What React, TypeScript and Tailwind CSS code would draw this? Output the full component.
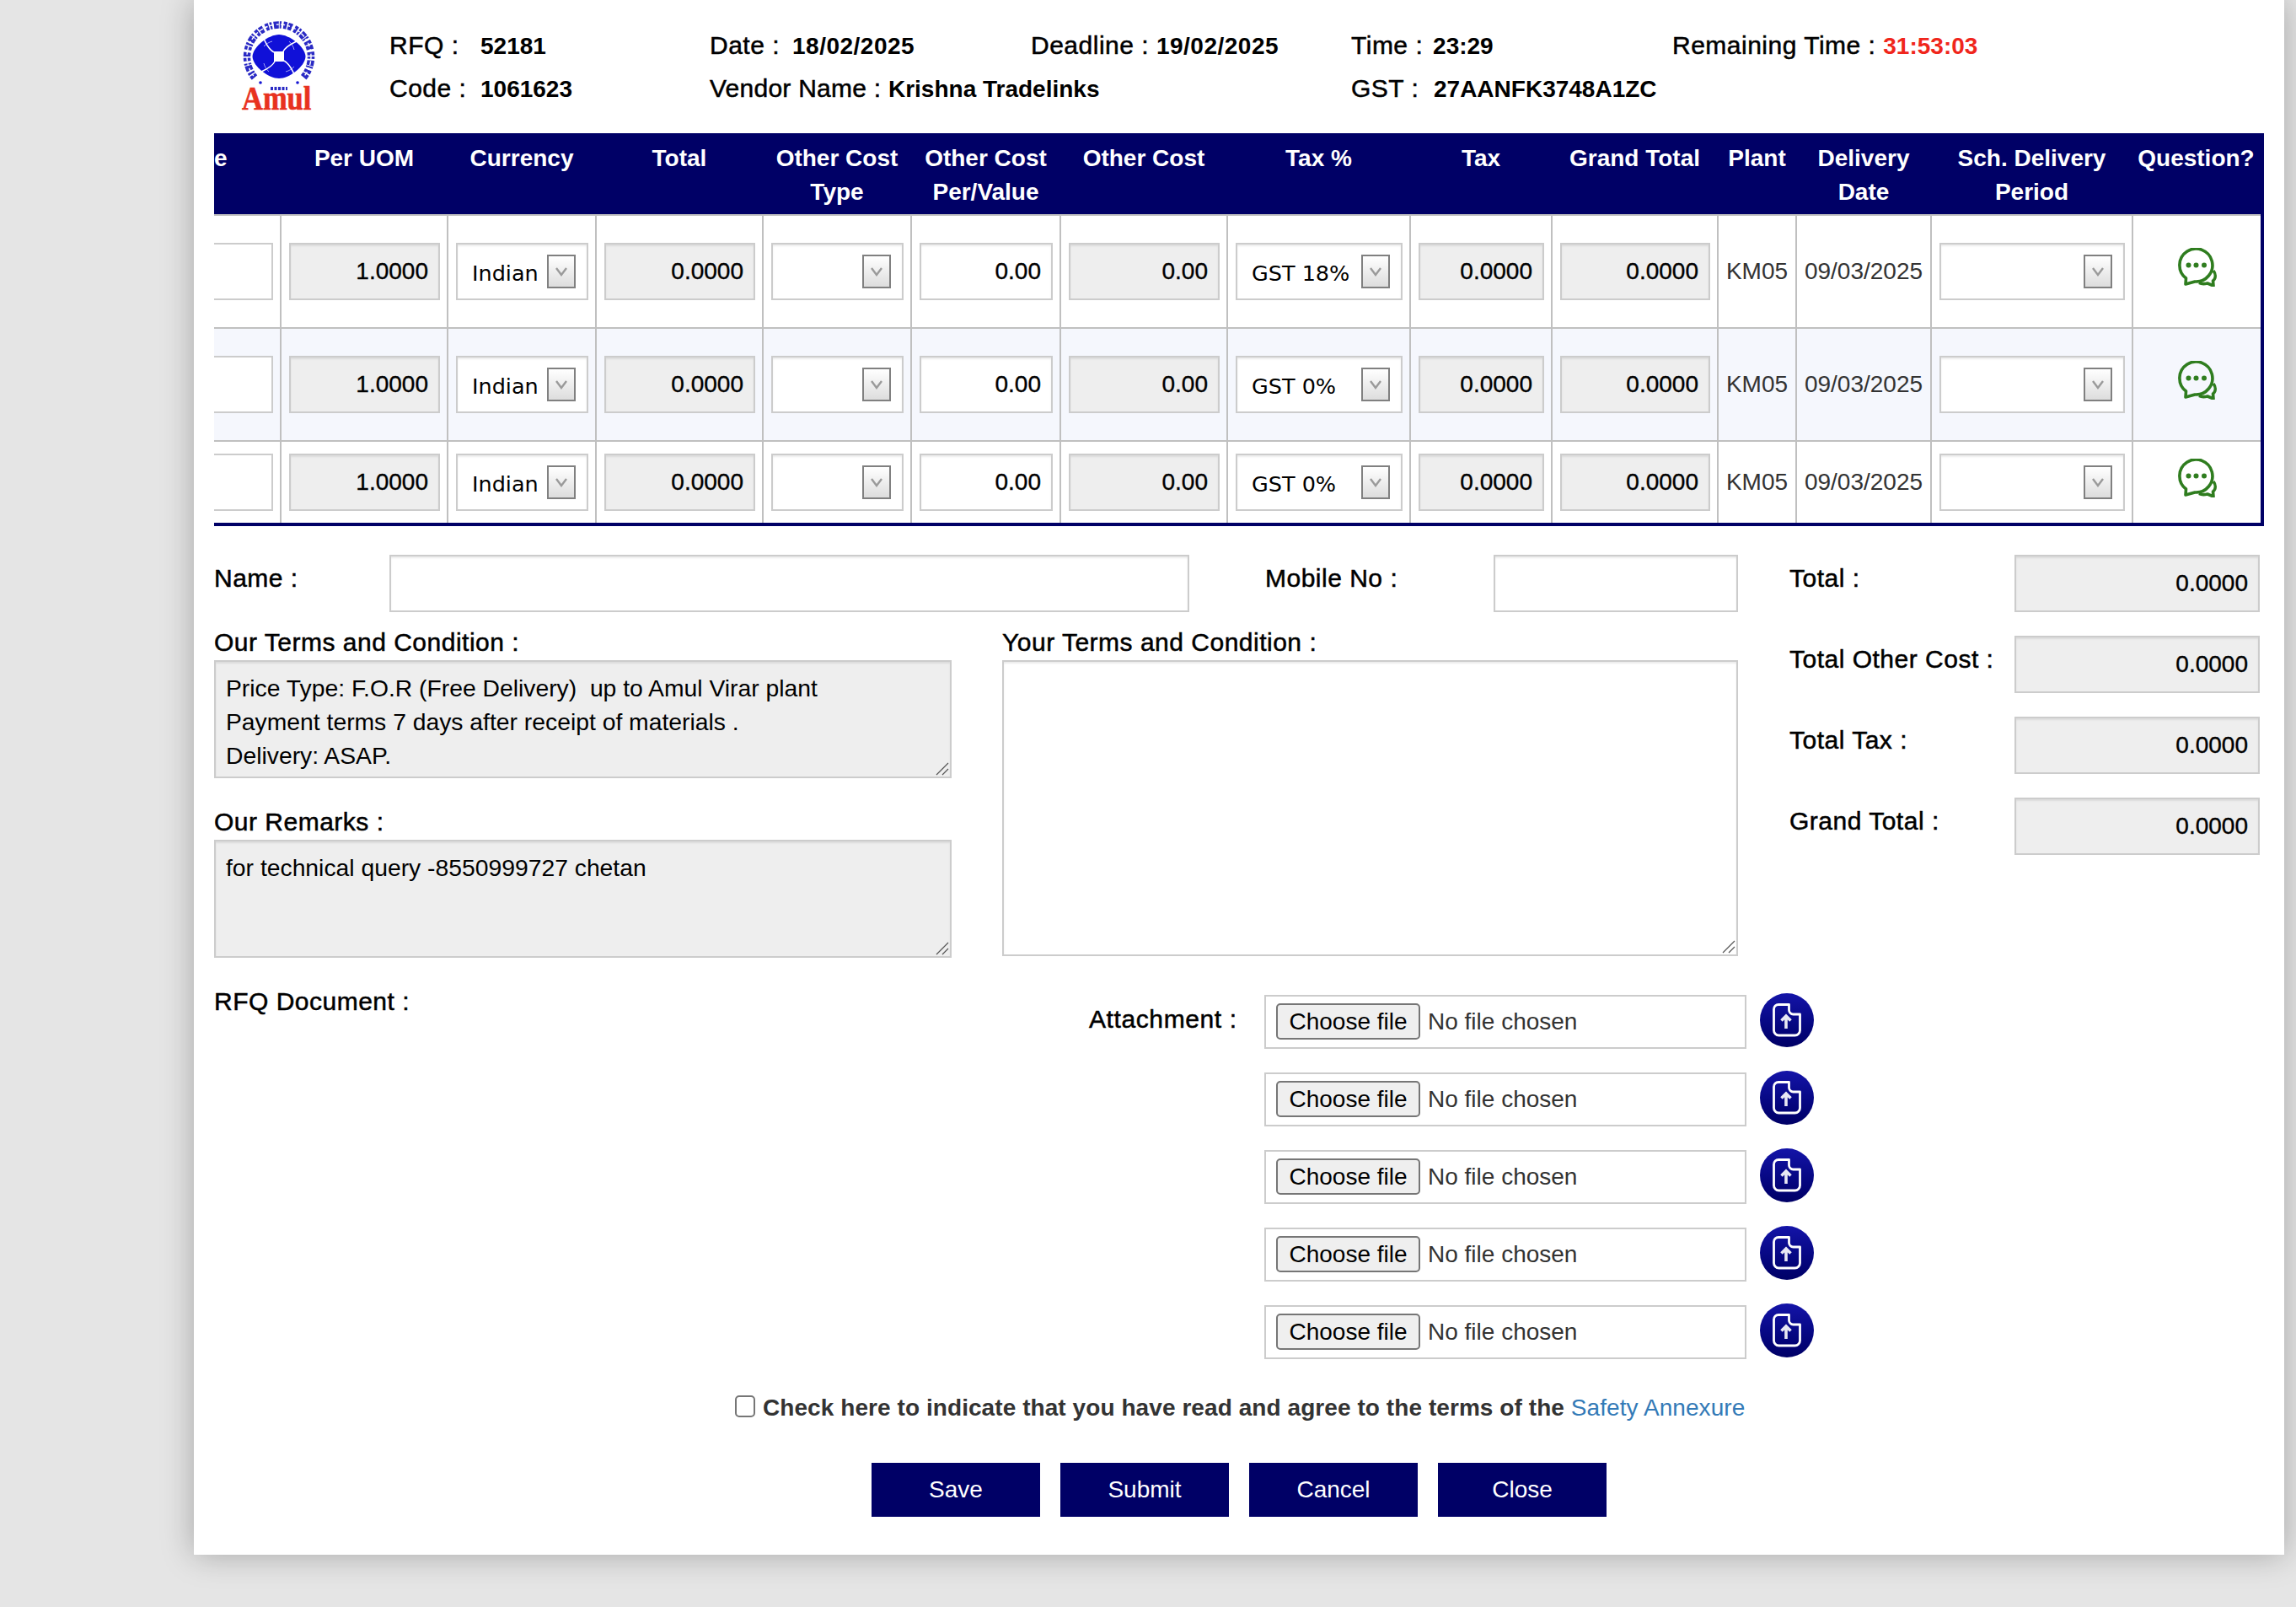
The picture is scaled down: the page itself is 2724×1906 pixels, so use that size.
const medium = "[-webkit-text-stroke:0.5px_currentColor]";
const strong = "text-[28px] font-bold tracking-normal [-webkit-text-stroke:0]";
const strongDate = "text-[28px] font-bold tracking-[0.5px] [-webkit-text-stroke:0]";

const columnWidths = [80, 198, 176, 198, 176, 177, 198, 217, 168, 197, 93, 160, 239, 151];

const headers: string[][] = [
  ["Per UOM"],
  ["Currency"],
  ["Total"],
  ["Other Cost", "Type"],
  ["Other Cost", "Per/Value"],
  ["Other Cost"],
  ["Tax %"],
  ["Tax"],
  ["Grand Total"],
  ["Plant"],
  ["Delivery", "Date"],
  ["Sch. Delivery", "Period"],
  ["Question?"],
];

const rows = [
  { tax: "GST 18%", height: "h-[134px]", bg: "bg-white", border: "border-b-2", shift: "" },
  { tax: "GST 0%", height: "h-[134px]", bg: "bg-[#f5f7fd]", border: "border-b-2", shift: "" },
  { tax: "GST 0%", height: "h-[96px]", bg: "bg-white", border: "", shift: "pt-[14px] pb-[14px]" },
];

function ReadOnlyBox({ value, grey }: { value: string; grey?: boolean }) {
  return (
    <input
      readOnly
      value={value}
      className={`h-[68px] w-full border-2 border-[#cccccc] pl-[12px] pr-[12px] text-right text-[28px] text-black shadow-[inset_0_2px_2px_rgba(0,0,0,0.08)] outline-none [-webkit-text-stroke:0.35px_currentColor] ${grey ? "bg-[#eeeeee]" : "bg-white"}`}
    />
  );
}

function SelectBox({ label }: { label?: string }) {
  return (
    <div className="flex h-[68px] w-full items-center border-2 border-[#cccccc] bg-white pl-[17px] pr-[13px] shadow-[inset_0_2px_2px_rgba(0,0,0,0.08)]">
      {label && <span className="pt-[5px] font-['DejaVu_Sans',sans-serif] text-[25.5px] leading-none text-black">{label}</span>}
      <span className="ml-auto flex h-[40px] w-[34px] items-center justify-center border-2 border-[#808080] bg-gradient-to-b from-white to-[#dddddd]">
        <svg width="16" height="12" viewBox="0 0 16 12" fill="none" stroke="#9a9a9a" strokeWidth="2.4">
          <path d="M2 2l6 8 6-8" />
        </svg>
      </span>
    </div>
  );
}

function ChatIcon() {
  return (
    <svg className="mx-auto -mt-[10px] block" width="46" height="46" viewBox="0 0 46 46" fill="none" stroke="#2f7d1f" strokeWidth="3.6" strokeLinejoin="round">
      <path d="M9 43L9.500 36A19.500 19.500 0 1 1 20 40Z" />
      <path d="M42 27C45 31 45 36 41.500 39L42 45L35 42C31 43 28 43 25 41.500" />
      <circle cx="12.500" cy="20.500" r="3" fill="#2f7d1f" stroke="none" />
      <circle cx="21.500" cy="20.500" r="3" fill="#2f7d1f" stroke="none" />
      <circle cx="31" cy="20.500" r="3" fill="#2f7d1f" stroke="none" />
    </svg>
  );
}

function UploadIcon() {
  return (
    <span className="-mt-[4px] flex h-[64px] w-[64px] shrink-0 items-center justify-center rounded-full bg-gradient-to-b from-[#1414a8] to-[#000066]">
      <svg width="34" height="40" viewBox="0 0 34 40" fill="none" stroke="white" strokeWidth="2.800">
        <path d="M7 1.500H19.500V8a5 5 0 0 0 5 5H32.500V32a6 6 0 0 1-6 6H7.500a6 6 0 0 1-6-6V7A5.500 5.500 0 0 1 7 1.500Z" strokeLinejoin="round" />
        <path d="M16 30V15M10.500 20.500L16 15L21.500 20.500" strokeWidth="3.600" stroke="#e8e8f4" />
      </svg>
    </span>
  );
}

function AmulLogo() {
  return (
    <svg className="mt-[24px] shrink-0" width="92" height="114" viewBox="0 0 92 114">
      {/* lettering of the ring, too small to read in the picture */}
      <path d="M19 68A38 38 0 1 1 77 68" fill="none" stroke="#2a2ac4" strokeWidth="8.500" strokeDasharray="4 1.500 2.500 2 6 1 2 2.500 4 1.500 5 3" />
      <circle cx="48" cy="43" r="38" fill="none" stroke="white" strokeWidth="1.400" strokeDasharray="3 2.500 5 3" />
      <circle cx="26" cy="74" r="1.800" fill="#1414d2" />
      <circle cx="70" cy="74" r="1.800" fill="#1414d2" />
      <path d="M38 81h20" stroke="#2a2ac4" strokeWidth="4" strokeDasharray="3 1.500" />
      <g transform="translate(48 43)">
        <path d="M0-26C12-26 31-12 31.500 0C31 12 12 26 0 26C-12 26-31 12-31.500 0C-31-12-12-26 0-26Z" fill="#1010d8" />
        {[0, 90, 180, 270].map((angle) => (
          <g key={angle} transform={`rotate(${angle})`} fill="none" stroke="white">
            <path d="M5-6C9-13 15-15 21-18" strokeWidth="1.500" />
            <path d="M-8-18C-12-17-15-15-18-12" strokeWidth="0.600" />
          </g>
        ))}
        <rect x="-6" y="-6" width="12" height="12" fill="white" />
      </g>
      <text transform="translate(4 106) scale(1 1.15)" fontFamily="'Liberation Serif', serif" fontWeight="700" fontSize="34.500" fill="#e8321f" stroke="#e8321f" strokeWidth="0.6">
        Amul
      </text>
    </svg>
  );
}

function TopInfo() {
  return (
    <div className="flex h-[158px] items-start pl-[53px]">
      <AmulLogo />
      <div className={`ml-[87px] mt-[34px] grid grid-cols-[380px_381px_380px_381px_auto] grid-rows-[40px_50px] items-center text-[30px] leading-[40px] tracking-[0.5px] text-black ${medium}`}>
        <div className="flex items-baseline"><span className="w-[108px]">RFQ :</span><b className={strong}>52181</b></div>
        <div className="flex items-baseline"><span className="w-[98px]">Date :</span><b className={strongDate}>18/02/2025</b></div>
        <div>Deadline : <b className={strongDate}>19/02/2025</b></div>
        <div>Time : <b className={`ml-[3px] ${strong}`}>23:29</b></div>
        <div>Remaining Time : <b className={`${strong} text-[#f0261c]`}>31:53:03</b></div>
        <div className="flex items-baseline pt-[12px]"><span className="w-[108px]">Code :</span><b className={strong}>1061623</b></div>
        <div className="col-span-2 pt-[12px] tracking-[0.25px]">Vendor Name : <b className={strong}>Krishna Tradelinks</b></div>
        <div className="col-span-2 flex items-baseline pt-[12px]"><span className="w-[98px]">GST :</span><b className={strong}>27AANFK3748A1ZC</b></div>
      </div>
    </div>
  );
}

function QuoteTable() {
  return (
    <div className="overflow-hidden border-b-4 border-r-4 border-[#000066]">
      <table className="w-[2428px] table-fixed border-separate border-spacing-0 text-[28px]">
        <colgroup>
          {columnWidths.map((w, i) => (
            <col key={i} style={{ width: w }} />
          ))}
        </colgroup>
        <thead>
          <tr className="h-[98px] bg-[#000066] text-white">
            <th className="border-b-2 border-[#c0c0c0] pt-[10px] text-left align-top font-bold leading-[40px]">e</th>
            {headers.map((lines, i) => (
              <th key={i} className="whitespace-nowrap border-b-2 border-[#c0c0c0] pr-[2px] pt-[10px] text-center align-top font-bold leading-[40px]">
                {lines.map((line) => (
                  <div key={line}>{line}</div>
                ))}
              </th>
            ))}
          </tr>
        </thead>
        <tbody>
          {rows.map((row, r) => {
            const cell = `border-r-2 border-[#c0c0c0] pl-[9px] pr-[8px] align-middle ${row.border} ${row.shift}`;
            return (
              <tr key={r} className={`${row.height} ${row.bg}`}>
                <td className={`border-r-2 border-[#c0c0c0] pr-[8px] ${row.border} ${row.shift}`}>
                  <div className="h-[68px] border-y-2 border-r-2 border-[#cccccc] bg-white" />
                </td>
                <td className={cell}><ReadOnlyBox grey value="1.0000" /></td>
                <td className={cell}><SelectBox label="Indian" /></td>
                <td className={cell}><ReadOnlyBox grey value="0.0000" /></td>
                <td className={cell}><SelectBox /></td>
                <td className={cell}><ReadOnlyBox value="0.00" /></td>
                <td className={cell}><ReadOnlyBox grey value="0.00" /></td>
                <td className={cell}><SelectBox label={row.tax} /></td>
                <td className={cell}><ReadOnlyBox grey value="0.0000" /></td>
                <td className={cell}><ReadOnlyBox grey value="0.0000" /></td>
                <td className={`border-r-2 border-[#c0c0c0] text-center text-[#333333] ${row.border}`}>KM05</td>
                <td className={`border-r-2 border-[#c0c0c0] text-center text-[#333333] ${row.border}`}>09/03/2025</td>
                <td className={cell}><SelectBox /></td>
                <td className={row.border + " border-[#c0c0c0]"}><ChatIcon /></td>
              </tr>
            );
          })}
        </tbody>
      </table>
    </div>
  );
}

function Totals() {
  return (
    <div className="flex w-[558px] flex-col gap-[28px]">
      {["Total :", "Total Other Cost :", "Total Tax :", "Grand Total :"].map((label) => (
        <div key={label} className="flex h-[68px] items-start justify-between">
          <span className={`pt-[8px] text-[30px] leading-[40px] tracking-[0.5px] text-black ${medium}`}>{label}</span>
          <div className="w-[291px]"><ReadOnlyBox grey value="0.0000" /></div>
        </div>
      ))}
    </div>
  );
}

// the browser's own grip is fainter than the one in the picture, so it is drawn over the corner
function TextArea({ height, grey, value }: { height: string; grey?: boolean; value?: string }) {
  return (
    <div className="relative">
      <textarea
        readOnly={grey}
        defaultValue={value}
        className={`block w-full resize-none border-2 border-[#cccccc] px-[12px] pb-[8px] pt-[11px] text-[28.3px] leading-[40px] text-black shadow-[inset_0_2px_2px_rgba(0,0,0,0.08)] outline-none ${height} ${grey ? "bg-[#eeeeee]" : "bg-white"}`}
      />
      <svg className="absolute bottom-[3px] right-[3px]" width="16" height="16" viewBox="0 0 16 16" stroke="#555555" strokeWidth="1.200">
        <path d="M1 15L15 1M8 15L15 8" />
      </svg>
    </div>
  );
}

function FormFields() {
  const label = `text-[30px] leading-[40px] tracking-[0.5px] text-black ${medium}`;
  return (
    <div className="w-[1808px]">
      <div className="flex h-[68px] items-start">
        <span className={`w-[208px] pt-[8px] ${label}`}>Name :</span>
        <input className="h-[68px] w-[949px] border-2 border-[#cccccc] bg-white shadow-[inset_0_2px_2px_rgba(0,0,0,0.08)]" />
        <span className={`ml-[90px] w-[271px] pt-[8px] ${label}`}>Mobile No :</span>
        <input className="h-[68px] w-[290px] border-2 border-[#cccccc] bg-white shadow-[inset_0_2px_2px_rgba(0,0,0,0.08)]" />
      </div>
      <div className="mt-[16px] flex gap-[60px]">
        <div className="w-[875px]">
          <div className={`mb-[1px] ${label}`}>Our Terms and Condition :</div>
          <TextArea
            grey
            height="h-[140px]"
            value={"Price Type: F.O.R (Free Delivery)  up to Amul Virar plant\nPayment terms 7 days after receipt of materials .\nDelivery: ASAP."}
          />
          <div className={`mb-[1px] mt-[32px] ${label}`}>Our Remarks :</div>
          <TextArea grey height="h-[140px]" value="for technical query -8550999727 chetan" />
        </div>
        <div className="w-[873px]">
          <div className={`mb-[1px] ${label}`}>Your Terms and Condition :</div>
          <TextArea height="h-[351px]" />
        </div>
      </div>
    </div>
  );
}

function Attachments() {
  return (
    <div className="mt-[44px] flex">
      <div className={`-mt-[12px] w-[1038px] text-[30px] leading-[40px] tracking-[0.5px] text-black ${medium}`}>RFQ Document :</div>
      <div className={`w-[208px] pt-[9px] text-[30px] leading-[40px] tracking-[0.6px] text-black ${medium}`}>Attachment :</div>
      <div className="flex flex-col gap-[28px]">
        {[1, 2, 3, 4, 5].map((n) => (
          <div key={n} className="flex h-[64px] items-center gap-[16px]">
            <div className="flex h-[64px] w-[572px] items-center border-2 border-[#cccccc] bg-white pb-[1px] pl-[12px] text-[28px]">
              <button className="h-[43px] w-[171px] rounded-[5px] border-2 border-[#767676] bg-[#efefef] leading-none text-black">Choose file</button>
              <span className="ml-[9px] text-[#333333]">No file chosen</span>
            </div>
            <UploadIcon />
          </div>
        ))}
      </div>
    </div>
  );
}

export default function App() {
  return (
    <div className="h-[1906px] overflow-hidden bg-[#e5e5e5] font-['Liberation_Sans',Arial,sans-serif]">
      <div className="ml-[230px] h-[1844px] w-[2480px] bg-white shadow-[0_0_36px_rgba(0,0,0,0.28)]">
        <TopInfo />
        <div className="px-[24px]">
          <QuoteTable />
          <div className="mt-[34px] flex gap-[61px]">
            <FormFields />
            <Totals />
          </div>
          <Attachments />
          <div className="mt-[38px] flex items-center pl-[618px]">
            <input type="checkbox" className="-mt-[4px] h-[26px] w-[24px] appearance-none rounded-[5px] border-2 border-[#767676] bg-white" />
            <span className="ml-[9px] text-[28px] font-bold leading-[40px] tracking-[0.07px] text-[#333333]">
              Check here to indicate that you have read and agree to the terms of the <a href="#safety" className="font-normal text-[#337ab7]">Safety Annexure</a>
            </span>
          </div>
          <div className="mt-[45px] flex justify-center gap-[24px]">
            {["Save", "Submit", "Cancel", "Close"].map((label) => (
              <button key={label} className="h-[64px] w-[200px] bg-[#000066] text-[28px] text-white">{label}</button>
            ))}
          </div>
        </div>
      </div>
    </div>
  );
}
